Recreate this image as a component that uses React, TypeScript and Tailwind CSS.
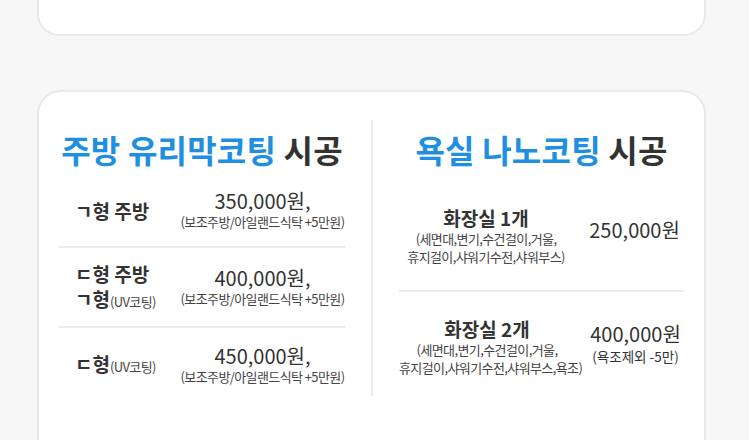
const kitchen = [
  { label: ["ㄱ형 주방"], price: "350,000원,", note: "(보조주방/아일랜드식탁 +5만원)" },
  { label: ["ㄷ형 주방", "ㄱ형|(UV코팅)"], price: "400,000원,", note: "(보조주방/아일랜드식탁 +5만원)" },
  { label: ["ㄷ형|(UV코팅)"], price: "450,000원,", note: "(보조주방/아일랜드식탁 +5만원)" },
]

const bath = [
  {
    name: "화장실 1개",
    desc: ["(세면대,변기,수건걸이,거울,", "휴지걸이,샤워기수전,샤워부스)"],
    price: "250,000원",
    note: "",
  },
  {
    name: "화장실 2개",
    desc: ["(세면대,변기,수건걸이,거울,", "휴지걸이,샤워기수전,샤워부스,욕조)"],
    price: "400,000원",
    note: "(욕조제외 -5만)",
  },
]

function Label({ text }: { text: string }) {
  const [main, small] = text.split("|")
  return (
    <div>
      {main}
      {small && <span className="text-[13px] font-normal tracking-[-0.6px] text-[#444]">{small}</span>}
    </div>
  )
}

export default function App() {
  return (
    <div
      className="min-h-[440px] w-[749px] overflow-hidden bg-[#f7f7f7] text-[#333]"
      style={{ fontFamily: '"Noto Sans CJK KR", "Noto Sans", sans-serif' }}
    >
      {/* previous card, cut off at top */}
      <div className="ml-[37px] h-[36px] w-[669px] rounded-b-[22px] border-x-2 border-b-2 border-[#e8e8e8] bg-white" />

      {/* price card */}
      <div className="ml-[37px] mt-[54px] h-[400px] w-[669px] rounded-t-[24px] border-2 border-[#e8e8e8] bg-white px-5 pt-[28px]">
        <div className="flex">
          {/* kitchen */}
          <div className="w-[286px] pt-[9px]">
            <h2 className="h-[40px] whitespace-nowrap text-center text-[32px] font-bold leading-[40px] tracking-[0.2px]">
              <span className="text-[#1e8fe1]">주방 유리막코팅</span> 시공
            </h2>
            {kitchen.map((row, i) => (
              <div
                key={i}
                className={
                  i === 0
                    ? "flex h-[79px] items-center border-b-2 border-[#ececec] pt-[5px]"
                    : i === 1
                      ? "flex h-[80px] items-center border-b-2 border-[#ececec]"
                      : "flex h-[74px] items-center"
                }
              >
                <div className="w-[121px] pl-4 text-[19px] font-bold leading-[25px]">
                  {row.label.map((l) => (
                    <Label key={l} text={l} />
                  ))}
                </div>
                <div className="flex-1 text-center">
                  <div className="text-[20px] leading-[23px]">{row.price}</div>
                  <div className="whitespace-nowrap text-[13px] leading-[19px] tracking-[-0.6px] text-[#444]">
                    {row.note}
                  </div>
                </div>
              </div>
            ))}
          </div>

          <div className="mx-[26px] h-[276px] w-[2px] bg-[#eeeeee]" />

          {/* bathroom */}
          <div className="w-[285px] pt-[9px]">
            <h2 className="h-[40px] whitespace-nowrap text-center text-[32px] font-bold leading-[40px] tracking-[0.2px]">
              <span className="text-[#1e8fe1]">욕실 나노코팅</span> 시공
            </h2>
            {bath.map((row, i) => (
              <div
                key={i}
                className={
                  i === 0
                    ? "flex h-[123px] items-center border-b-2 border-[#ececec] pt-[13px]"
                    : "flex h-[110px] items-center"
                }
              >
                <div className="w-[176px] text-center">
                  <div className="text-[19px] font-bold leading-[24px]">{row.name}</div>
                  {row.desc.map((d) => (
                    <div
                      key={d}
                      className="whitespace-nowrap text-[13px] leading-[18px] tracking-[-0.6px] text-[#444]"
                    >
                      {d}
                    </div>
                  ))}
                </div>
                <div className={row.note ? "ml-3 w-[100px] pb-[6px] text-center" : "ml-3 w-[100px] pb-[12px] text-center"}>
                  <div className="text-[20px] leading-[24px]">{row.price}</div>
                  {row.note && <div className="whitespace-nowrap text-[13.5px] leading-[20px]">{row.note}</div>}
                </div>
              </div>
            ))}
          </div>
        </div>
      </div>
    </div>
  )
}
